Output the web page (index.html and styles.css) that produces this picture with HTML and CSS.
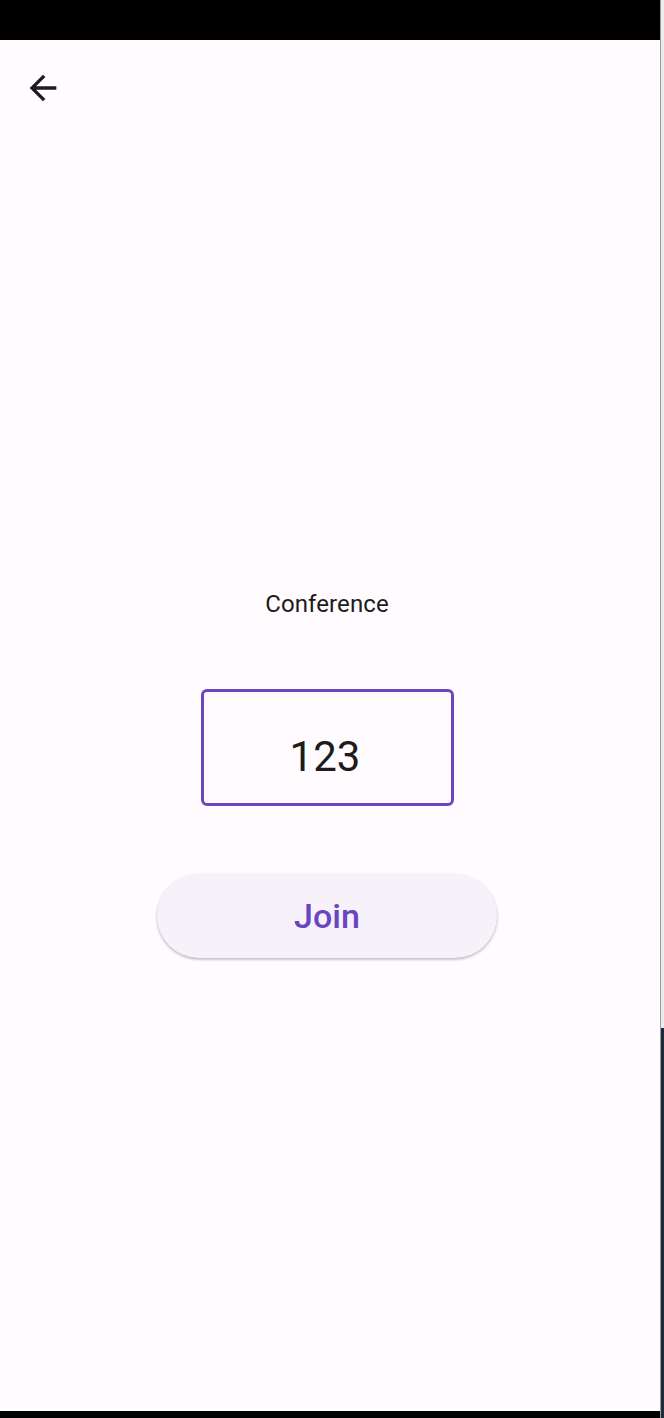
FILE: index.html
```html
<!DOCTYPE html>
<html lang="en">
<head>
<meta charset="utf-8">
<title>Conference</title>
<link rel="stylesheet" href="styles.css">
</head>
<body>
<div class="device">
  <div class="screen">
    <div class="statusbar"></div>
    <header class="appbar">
      <button class="back" aria-label="Back">
        <svg viewBox="0 0 24 24" width="40" height="40"><path d="M20 11H7.83l5.59-5.59L12 4l-8 8 8 8 1.41-1.41L7.83 13H20v-2z" fill="#1d1b20"/></svg>
      </button>
    </header>
    <main class="content">
      <div class="label">Conference</div>
      <div class="field">123</div>
      <button class="join">Join</button>
    </main>
    <div class="navbar"></div>
  </div>
  <div class="edge">
    <div class="edge-top"></div>
    <div class="edge-bottom"></div>
  </div>
</div>
</body>
</html>
```

FILE: styles.css
```css
* { box-sizing: border-box; }
html, body { margin: 0; padding: 0; }
body {
  width: 664px;
  height: 1418px;
  overflow: hidden;
  font-family: Roboto, "Noto Sans", sans-serif;
  background: #fffbfe;
}
.device {
  display: flex;
  height: 1418px;
}
.screen {
  width: 660px;
  display: flex;
  flex-direction: column;
  background: #fffbfe;
}
.statusbar {
  height: 40px;
  background: #000;
  flex: none;
}
.appbar {
  height: 96px;
  flex: none;
  display: flex;
  align-items: center;
  padding-left: 23px;
}
.back {
  border: 0;
  background: none;
  padding: 0;
  width: 40px;
  height: 40px;
  display: block;
}
.back svg { display: block; }
.content {
  flex: 1;
  display: flex;
  flex-direction: column;
  align-items: center;
  justify-content: center;
  padding-right: 6px;
  padding-bottom: 4px;
}
.label {
  font-size: 24px;
  line-height: 36px;
  color: #1d1b20;
  letter-spacing: 0.1px;
}
.field {
  margin-top: 67px;
  width: 253px;
  height: 117px;
  border: 3px solid #6e45c0;
  border-radius: 6px;
  padding-top: 40px;
  padding-right: 4px;
  text-align: center;
  font-size: 42px;
  line-height: 49px;
  color: #1d1b20;
}
.join {
  margin-top: 68px;
  width: 340px;
  height: 84px;
  border: 0;
  border-radius: 42px;
  background: #f7f2fa;
  box-shadow: 0 1.5px 3px rgba(0,0,0,0.28);
  font-family: Roboto, "Noto Sans", sans-serif;
  font-size: 34px;
  font-weight: 500;
  color: #6b44c0;
  display: flex;
  align-items: center;
  justify-content: center;
  padding: 0;
}
.navbar {
  height: 7px;
  flex: none;
  background: #000;
}
.edge {
  width: 4px;
  display: flex;
  flex-direction: column;
  border-left: 1px solid #9a9a9a;
}
.edge-top {
  height: 1028px;
  background: #ececec;
}
.edge-bottom {
  flex: 1;
  background: #1f2b3c;
}
```
